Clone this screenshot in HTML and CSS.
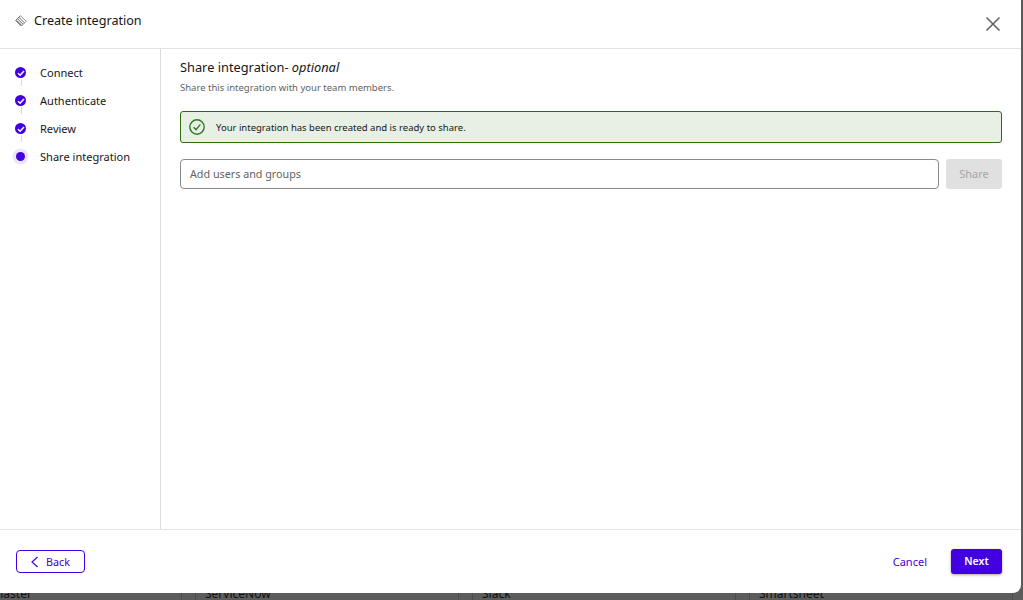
FILE: index.html
```html
<!DOCTYPE html>
<html lang="en">
<head>
<meta charset="utf-8">
<title>Create integration</title>
<link rel="stylesheet" href="styles.css">
</head>
<body>
<div class="backdrop">
  <div class="bg-row">
    <div class="bg-card bg-first"><span>Plaster</span></div>
    <div class="bg-card"><span>ServiceNow</span></div>
    <div class="bg-card"><span>Slack</span></div>
    <div class="bg-card"><span>Smartsheet</span></div>
  </div>
</div>
<div class="modal">
  <header class="modal-head">
    <div class="title">
      <svg class="logo" width="12" height="12" viewBox="0 0 12 12" fill="none" stroke="#555" stroke-width=".9">
        <path d="M5.5 .7 .7 5.5 6.2 11"/>
        <path d="M5.5 .7 11.2 6.2 6.5 11" stroke="#888"/>
        <path d="M4 2.4 9.4 7.8M2.6 3.8 8 9.2M1.4 5.2 6.8 10.4"/>
      </svg>
      <span>Create integration</span>
    </div>
    <svg class="close" width="16" height="16" viewBox="0 0 16 16" fill="none" stroke="#5f5f5f" stroke-width="1.5">
      <path d="M1.5 1.5l13 13M14.5 1.5l-13 13"/>
    </svg>
  </header>
  <div class="modal-body">
    <nav class="steps">
      <div class="step done">
        <span class="dot"><svg width="8" height="8" viewBox="0 0 8 8" fill="none" stroke="#fff" stroke-width="1.5"><path d="M1 4.3 3.1 6.2 7 1.9"/></svg></span>
        <span class="label">Connect</span>
      </div>
      <div class="step done">
        <span class="dot"><svg width="8" height="8" viewBox="0 0 8 8" fill="none" stroke="#fff" stroke-width="1.5"><path d="M1 4.3 3.1 6.2 7 1.9"/></svg></span>
        <span class="label">Authenticate</span>
      </div>
      <div class="step done">
        <span class="dot"><svg width="8" height="8" viewBox="0 0 8 8" fill="none" stroke="#fff" stroke-width="1.5"><path d="M1 4.3 3.1 6.2 7 1.9"/></svg></span>
        <span class="label">Review</span>
      </div>
      <div class="step current">
        <span class="dot"></span>
        <span class="label">Share integration</span>
      </div>
    </nav>
    <main class="content">
      <h2 class="heading">Share integration- <em>optional</em></h2>
      <p class="sub">Share this integration with your team members.</p>
      <div class="alert">
        <svg width="16" height="16" viewBox="0 0 16 16" fill="none" stroke="#2d7a1f" stroke-width="1.4">
          <circle cx="8" cy="8" r="7.2"/>
          <path d="M4.6 8.2 7 10.6 11.4 5.4"/>
        </svg>
        <span>Your integration has been created and is ready to share.</span>
      </div>
      <div class="share-row">
        <div class="input">Add users and groups</div>
        <div class="share-btn">Share</div>
      </div>
    </main>
  </div>
  <footer class="modal-foot">
    <div class="back">
      <svg width="9" height="12" viewBox="0 0 9 12" fill="none" stroke="#4200e0" stroke-width="1.2"><path d="M7.5 1 2 6l5.5 5"/></svg>
      <span>Back</span>
    </div>
    <div class="foot-right">
      <span class="cancel">Cancel</span>
      <span class="next">Next</span>
    </div>
  </footer>
</div>
</body>
</html>
```
FILE: styles.css
```css
* { box-sizing: border-box; }
html, body { margin: 0; height: 100%; }
body {
  width: 1023px;
  height: 600px;
  overflow: hidden;
  position: relative;
  background: #5c5c5c;
  font-family: "Noto Sans", "Open Sans", sans-serif;
  color: #161616;
}
.backdrop {
  height: 600px;
  display: flex;
  flex-direction: column;
  justify-content: flex-end;
}
.bg-row {
  display: flex;
  gap: 13px;
  height: 12px;
  overflow: hidden;
}
.bg-card {
  width: 264px;
  flex: none;
  padding-left: 9px;
  font-size: 12px;
  line-height: 12px;
  color: #111;
  border-left: 1px solid #4c4c4c;
  border-right: 1px solid #4c4c4c;
}
.bg-first {
  width: 182px;
  border-left: 0;
  padding-left: 0;
}
.bg-first span {
  display: inline-block;
  margin-left: -7px;
}
.modal {
  position: absolute;
  left: 0;
  top: 0;
  width: 1021px;
  height: 593px;
  background: #fff;
  border-radius: 0 0 8px 0;
  display: flex;
  flex-direction: column;
}
.modal-head {
  height: 49px;
  flex: none;
  border-bottom: 1px solid #e3e3e3;
  display: flex;
  align-items: center;
  justify-content: space-between;
  padding: 0 20px 7px 15px;
}
.title {
  display: flex;
  align-items: center;
  gap: 7px;
  font-size: 12.6px;
  line-height: 16px;
}
.close { margin-top: 7px; }
.modal-body {
  flex: 1;
  min-height: 0;
  display: flex;
}
.steps {
  width: 161px;
  flex: none;
  border-right: 1px solid #dcdcdc;
  padding: 9px 0 0 15px;
  display: flex;
  flex-direction: column;
}
.step {
  height: 28px;
  display: flex;
  align-items: center;
  gap: 14px;
  font-size: 11.05px;
  position: relative;
}
.step.done::after {
  content: "";
  position: absolute;
  left: 6px;
  top: 21px;
  width: 1px;
  height: 7px;
  background: #d9d9d9;
}
.dot {
  width: 11px;
  height: 11px;
  margin-top: 1px;
  border-radius: 50%;
  background: #4200e0;
  display: flex;
  align-items: center;
  justify-content: center;
  flex: none;
}
.current .dot {
  width: 9px;
  height: 9px;
  margin: 1px 1px 0;
  box-shadow: 0 0 0 3.5px #ece6fb;
}
.content {
  flex: 1;
  min-width: 0;
  padding: 10px 19px 0 19px;
}
.heading {
  margin: 0;
  font-size: 12.8px;
  line-height: 17px;
  font-weight: 400;
}
.sub {
  margin: 5px 0 0;
  font-size: 9.5px;
  line-height: 14px;
  color: #5f5f5f;
}
.alert {
  margin-top: 16px;
  height: 32px;
  border: 1px solid #2b6d0f;
  border-radius: 3px;
  background: #e8f0e6;
  display: flex;
  align-items: center;
  gap: 11px;
  padding-left: 8px;
  font-size: 9.5px;
}
.share-row {
  margin-top: 16px;
  display: flex;
  gap: 7px;
}
.input {
  flex: 1;
  height: 30px;
  border: 1px solid #8a8a8a;
  border-radius: 4px;
  padding-left: 9px;
  display: flex;
  align-items: center;
  font-size: 10.75px;
  color: #5f5f5f;
}
.share-btn {
  width: 56px;
  height: 30px;
  background: #e0e0e0;
  border-radius: 3px;
  display: flex;
  align-items: center;
  justify-content: center;
  padding-bottom: 2px;
  font-size: 11px;
  color: #a6a6a6;
}
.modal-foot {
  height: 64px;
  flex: none;
  border-top: 1px solid #e3e3e3;
  display: flex;
  align-items: flex-start;
  justify-content: space-between;
  padding: 19px 19px 0 16px;
}
.back {
  width: 69px;
  height: 23px;
  margin-top: 1px;
  border: 1px solid #4200e0;
  border-radius: 4px;
  display: flex;
  align-items: center;
  gap: 7px;
  padding-left: 13px;
  font-size: 10.75px;
  color: #4200e0;
}
.foot-right {
  display: flex;
  align-items: center;
  gap: 24px;
}
.cancel {
  font-size: 11px;
  color: #4200e0;
}
.next {
  width: 51px;
  height: 25px;
  background: #4200e0;
  border-radius: 3px;
  color: #fff;
  font-size: 10.5px;
  font-weight: 600;
  display: flex;
  align-items: center;
  justify-content: center;
  padding-bottom: 2px;
  box-shadow: 0 1px 3px rgba(0,0,0,.35);
}
```
